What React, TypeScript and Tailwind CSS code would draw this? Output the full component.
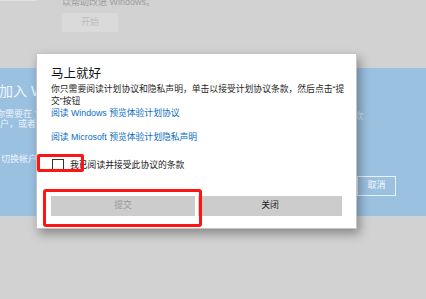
import React from 'react';

const font = { fontFamily: '"Liberation Sans", "Noto Sans CJK SC", sans-serif' };

export default function App() {
  return (
    <div className="relative w-[426px] h-[299px] overflow-hidden bg-[#d2d2d2]" style={font}>
      {/* 背景页面 */}
      <div className="flex flex-col h-full">
        <div className="relative h-[68px] pl-[62px]">
          <div className="absolute left-0 top-0 w-[36px] h-[1px] bg-[#e2e2e2]" />
          <p className="-mt-[4px] text-[9px] leading-[12px] text-[#9d9d9d]">以帮助改进 Windows。</p>
          <div className="mt-[5px] w-[56px] h-[19px] bg-[#dadada] flex items-center justify-center text-[9px] text-[#bdbdbd]">
            开始
          </div>
        </div>

        <div className="h-[148px] bg-[#9bc1e1] flex justify-between pr-[30px]">
          <div className="-ml-[1px] pt-[14px] text-[#f2f7fc] whitespace-nowrap">
            <p className="text-[14px] leading-[18px]">加入 W</p>
            <p className="-ml-[3px] mt-[9px] text-[9px] leading-[10px] text-[#eaf2fa]">你需要在 Y</p>
            <p className="ml-[1px] text-[9px] leading-[11px] text-[#eaf2fa]">户，或者切</p>
            <p className="ml-[2px] mt-[23px] text-[9px] leading-[12px] text-[#eaf2fa]">切换帐户</p>
          </div>
          <div className="flex flex-col items-start">
            <span className="mt-[42px] ml-[-3px] text-[9px] text-[#d6e6f4]">款</span>
            <div className="mt-[52px] w-[39px] h-[20px] border-[1.5px] border-[#eaf2fa] flex items-center justify-center text-[9px] text-[#f4f8fc]">
              取消
            </div>
          </div>
        </div>

        <div className="flex-1" />
      </div>

      {/* 对话框 */}
      <div className="absolute left-[36px] top-[53px] w-[321px] h-[176px] bg-white border border-[#c4c4c4] shadow-[3px_5px_10px_rgba(0,0,0,0.35)] px-[14px] pt-[11px] text-[#1f1f1f]">
        <h1 className="text-[12.5px] leading-[18px] text-[#111]">马上就好</h1>
        <p className="text-[8.8px] leading-[12px] whitespace-nowrap">
          你只需要阅读计划协议和隐私声明，单击以接受计划协议条款，然后点击“提
          <br />
          交”按钮
        </p>
        <p className="text-[8.8px] leading-[12px] text-[#0a6cc4]">阅读 Windows 预览体验计划协议</p>
        <p className="mt-[12px] text-[8.8px] leading-[12px] text-[#0a6cc4]">阅读 Microsoft 预览体验计划隐私声明</p>

        <label className="mt-[15px] flex items-center gap-[6px] h-[14px]">
          <span className="ml-[1px] w-[12px] h-[12px] border-[1.5px] border-[#333]" />
          <span className="text-[8.8px] leading-[12px] text-[#222]">我已阅读并接受此协议的条款</span>
        </label>

        <div className="mt-[24px] grid grid-cols-2 gap-[3px]">
          <button className="h-[20px] bg-[#cccccc] text-[8.8px] text-[#9a9a9a]">提交</button>
          <button className="h-[20px] bg-[#cccccc] text-[8.8px] text-[#222]">关闭</button>
        </div>
      </div>

      {/* 红色标注框 */}
      <div className="absolute left-[37px] top-[154px] w-[47px] h-[18px] border-[3px] border-[#ff1414] rounded-[2px]" />
      <div className="absolute left-[43px] top-[189px] w-[159px] h-[38px] border-[3px] border-[#ff1414] rounded-[3px]" />
    </div>
  );
}
